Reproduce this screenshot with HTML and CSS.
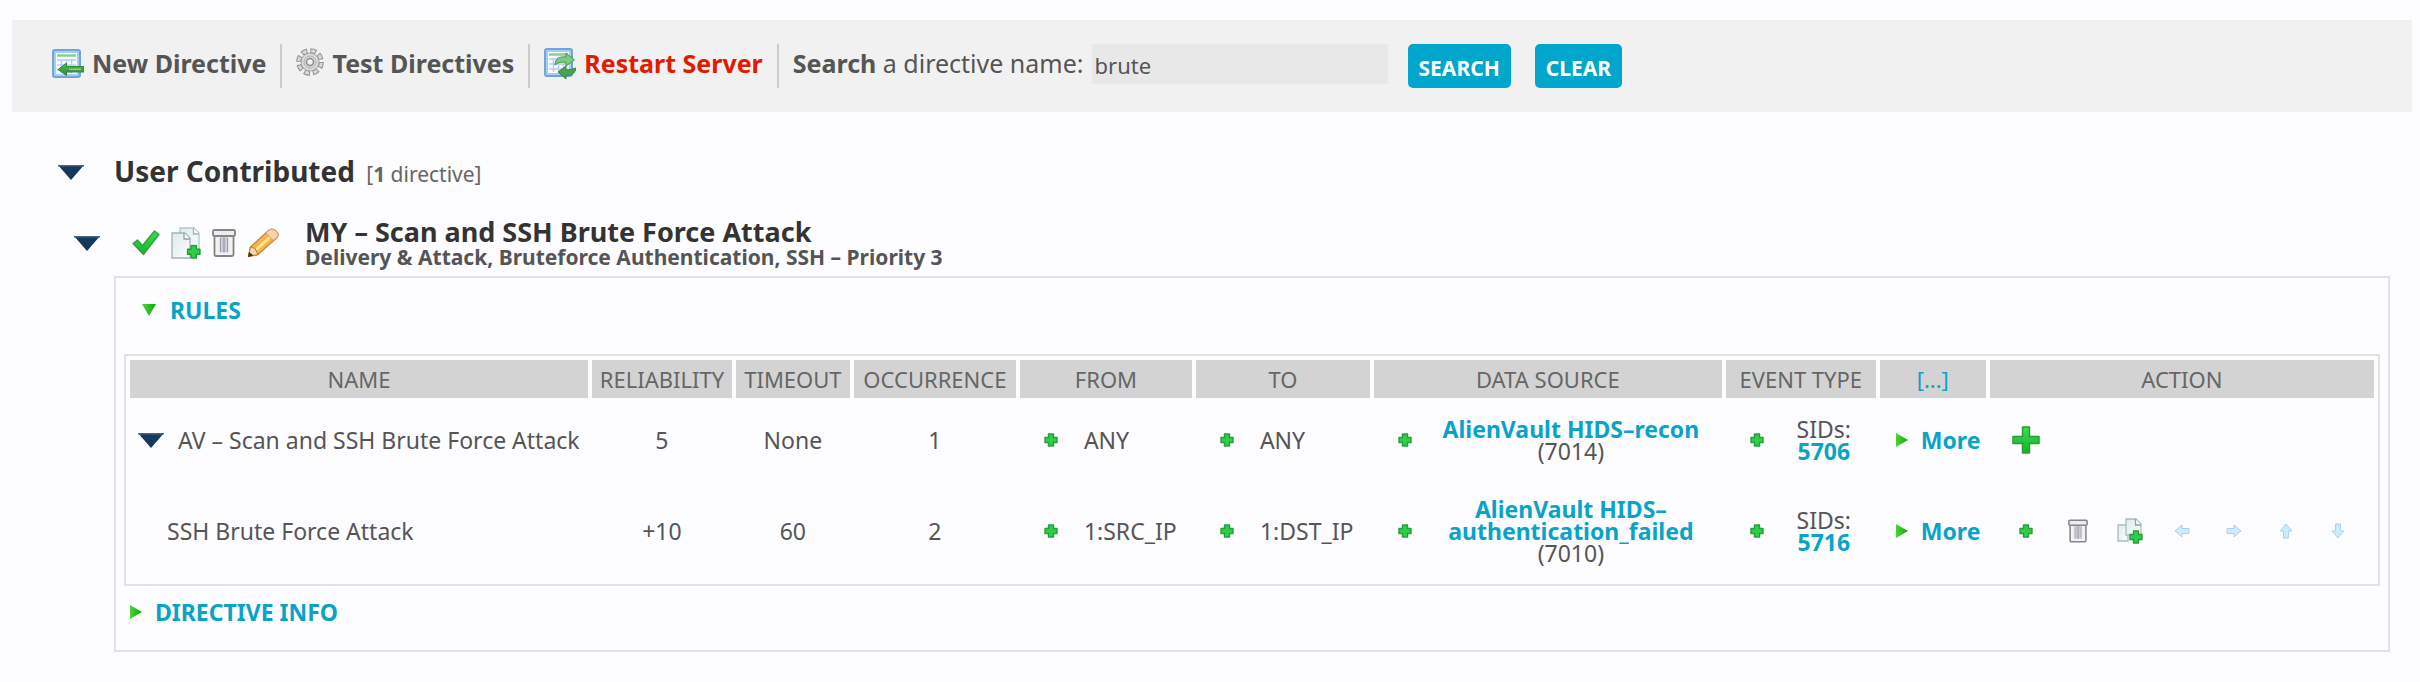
FILE: index.html
```html
<!DOCTYPE html>
<html lang="en">
<head>
<meta charset="utf-8">
<title>Directives</title>
<link rel="stylesheet" href="styles.css">
</head>
<body>
<svg class="sprite" width="0" height="0" aria-hidden="true">
  <defs>
    <linearGradient id="g-green" x1="0" y1="0" x2="0" y2="1"><stop offset="0" stop-color="#3fdc50"/><stop offset="1" stop-color="#0db52b"/></linearGradient>
    <linearGradient id="g-page" x1="0" y1="0" x2="1" y2="1"><stop offset="0" stop-color="#dfeaec"/><stop offset="1" stop-color="#fbfdfd"/></linearGradient>
    <linearGradient id="g-bin" x1="0" y1="0" x2="1" y2="0"><stop offset="0" stop-color="#f4f4f4"/><stop offset="0.5" stop-color="#b9bac6"/><stop offset="1" stop-color="#f4f4f4"/></linearGradient>
    <linearGradient id="g-arrow" x1="0" y1="0" x2="0" y2="1"><stop offset="0" stop-color="#5bb25f"/><stop offset="1" stop-color="#2c8a38"/></linearGradient>
    <linearGradient id="g-tri" x1="0" y1="0" x2="1" y2="0"><stop offset="0" stop-color="#4fd23c"/><stop offset="1" stop-color="#0cae00"/></linearGradient>
  </defs>
  <symbol id="i-sheet" viewBox="0 0 32 30">
    <rect x="1" y="1" width="27" height="27" rx="2" fill="#a9cdf0" stroke="#6ea6dc" stroke-width="2"/>
    <rect x="4" y="4" width="21" height="21" fill="#f8fbff"/>
    <path d="M5 6.500h19" stroke="#8ccf86" stroke-width="2.500"/>
    <path d="M5 11h19M5 16h19M5 21h19M9.500 10v14M14.500 10v14M19.500 10v14" stroke="#b4cfee" stroke-width="1.500"/>
  </symbol>
  <symbol id="i-new" viewBox="0 0 32 30">
    <use href="#i-sheet" width="32" height="30"/>
    <path d="M32 17.500H14.500V14L6 20.500l8.500 6V23H32z" fill="url(#g-arrow)" stroke="#2f8a3a"/>
    <path d="M17 20.300h12" stroke="#8bd08a" stroke-width="1.500"/>
  </symbol>
  <symbol id="i-restart" viewBox="0 0 32 32">
    <use href="#i-sheet" width="32" height="30"/>
    <path d="M11 17c0-6 4-9 11-8V5l8.500 7-8.500 6v-3.500c-5-1-8 0-11 2.500z" fill="#7fc983" stroke="#3f9a4b"/>
    <path d="M32 20c-1 6-5 7.500-10 7.500V31l-8-7 8-6v4c4 0 6-1 10-2z" fill="#48a452" stroke="#2f8a3a"/>
  </symbol>
  <symbol id="i-gear" viewBox="0 0 28 28">
    <circle cx="14" cy="14" r="11.300" fill="none" stroke="#8e8e8e" stroke-width="5" stroke-dasharray="5.900 2.975"/>
    <circle cx="14" cy="14" r="11.300" fill="none" stroke="#dadada" stroke-width="3" stroke-dasharray="4 4.875" stroke-dashoffset="-0.950"/>
    <circle cx="14" cy="14" r="9" fill="#dadada" stroke="#a3a3a3"/>
    <circle cx="14" cy="14" r="6" fill="none" stroke="#b0b0b0"/>
    <circle cx="14" cy="14" r="3.500" fill="#f1f1f1" stroke="#8b8b8b" stroke-width="1.500"/>
  </symbol>
  <symbol id="i-down" viewBox="0 0 26 15"><path d="M0 0h26L13 15z" fill="#14395a"/><path d="M0 .750h26" stroke="#4a6480" stroke-width="1.500"/></symbol>
  <symbol id="i-gdown" viewBox="0 0 14 12"><path d="M0 0h14L7 12z" fill="url(#g-tri)"/></symbol>
  <symbol id="i-gright" viewBox="0 0 12 14"><path d="M0 0l12 7L0 14z" fill="url(#g-tri)"/></symbol>
  <symbol id="i-check" viewBox="0 0 28 26"><path d="M1 13.500L5.500 10l5 5.500L22.500 1 27 4.500 11.500 24.500z" fill="url(#g-green)" stroke="#3d9a48" stroke-width="1.300" stroke-linejoin="round"/></symbol>
  <symbol id="i-plus" viewBox="0 0 14 14"><path d="M4.500 1h5v3.500H13v5H9.500V13h-5V9.500H1v-5h3.500z" fill="#2bd046" stroke="#2d9a3c" stroke-width="1.400" stroke-linejoin="round"/></symbol>
  <symbol id="i-bigplus" viewBox="0 0 28 28"><path d="M10.500 1h7v9.500H27v7h-9.500V27h-7v-9.500H1v-7h9.500z" fill="url(#g-green)" stroke="#2b9a3a" stroke-width="1.500" stroke-linejoin="round"/></symbol>
  <symbol id="i-copy" viewBox="0 0 30 32">
    <path d="M9 1h14l5 5v20H9z" fill="url(#g-page)" stroke="#b3c8cc" stroke-width="1.300"/>
    <path d="M22.500 1v6H28" fill="#fff" stroke="#9fb3b8" stroke-width="1.300"/>
    <path d="M1 6h13l5 5v20H1z" fill="url(#g-page)" stroke="#a3b3b8" stroke-width="1.300"/>
    <path d="M13 6v6h6" fill="#fff" stroke="#8ea2a8" stroke-width="1.300"/>
    <use href="#i-plus" x="15.500" y="17.500" width="14.500" height="14.500"/>
  </symbol>
  <symbol id="i-copy-sm" viewBox="0 0 26 26">
    <path d="M1 7h10v16H1z" fill="url(#g-page)" stroke="#a8bcc0" stroke-width="1.300"/>
    <path d="M9 1h10l5 5v11H9z" fill="url(#g-page)" stroke="#a8bcc0" stroke-width="1.300"/>
    <path d="M18.500 1v6H24" fill="#fff" stroke="#8ea2a8" stroke-width="1.300"/>
    <use href="#i-plus" x="12" y="12" width="14" height="14"/>
  </symbol>
  <symbol id="i-bin" viewBox="0 0 24 28">
    <path d="M2.500 7h19v18.500q0 1.500-1.500 1.500H4q-1.500 0-1.500-1.500z" fill="#f2f2f2" stroke="#858585" stroke-width="1.800"/>
    <rect x="6" y="8" width="12" height="15.500" fill="url(#g-bin)"/>
    <path d="M8.500 9v14M12 9v14M15.500 9v14" stroke="#9c9dab"/>
    <rect x="1" y="1" width="22" height="6" rx="1.500" fill="#ededed" stroke="#858585" stroke-width="1.800"/>
  </symbol>
  <symbol id="i-pencil" viewBox="0 0 32 30">
    <path d="M1.500 28.500L3.500 19 21.500 2.500Q25-.500 29 3t.500 7L11 26.500z" fill="#f3b64e" stroke="#c98538" stroke-width="1.300" stroke-linejoin="round"/>
    <path d="M8.500 20.500L22.500 7.500l2 2L10.500 22.500z" fill="#ffe97a"/>
    <path d="M21.500 2.500Q25-.500 29 3t.500 7L26 12.500 19 5z" fill="#f7d3ae" stroke="#d59a60"/>
    <path d="M1.500 28.500L3.500 19l4.500 1.500L11 26.500z" fill="#f6d9b0" stroke="#c07a3a"/>
    <path d="M1 29l1-5 4.500 3.500z" fill="#4a2f23"/>
  </symbol>
  <symbol id="i-left" viewBox="0 0 16 14"><path d="M1 7l7-6v3.500h7v5H8V13z" fill="#cdebfd" stroke="#a9d3ee" stroke-linejoin="round"/></symbol>
</svg>

<form class="toolbar">
  <a class="tool" href="#new"><svg class="ic-new"><use href="#i-new"/></svg>New Directive</a>
  <a class="tool" href="#test"><svg class="ic-gear"><use href="#i-gear"/></svg>Test Directives</a>
  <a class="tool tool-alert" href="#restart"><svg class="ic-restart"><use href="#i-restart"/></svg>Restart Server</a>
  <label class="search-label" for="q"><b>Search</b> a directive name:</label>
  <input class="search-box" id="q" type="text" value="brute">
  <button class="btn" type="button">SEARCH</button>
  <button class="btn" type="button">CLEAR</button>
</form>

<main class="content">
  <header class="group">
    <button class="icon-btn" type="button" aria-label="Collapse group"><svg class="ic-down"><use href="#i-down"/></svg></button>
    <h1 class="group-title">User Contributed <small class="count">[<b>1</b> directive]</small></h1>
  </header>

  <section>
    <header class="directive">
      <button class="icon-btn" type="button" aria-label="Collapse directive"><svg class="ic-down"><use href="#i-down"/></svg></button>
      <div class="directive-tools">
        <button class="icon-btn" type="button" aria-label="Enable"><svg class="ic-check"><use href="#i-check"/></svg></button>
        <button class="icon-btn" type="button" aria-label="Clone"><svg class="ic-copy"><use href="#i-copy"/></svg></button>
        <button class="icon-btn" type="button" aria-label="Delete"><svg class="ic-bin"><use href="#i-bin"/></svg></button>
        <button class="icon-btn" type="button" aria-label="Edit"><svg class="ic-pencil"><use href="#i-pencil"/></svg></button>
      </div>
      <div>
        <h2 class="directive-title">MY – Scan and SSH Brute Force Attack</h2>
        <p class="directive-sub">Delivery &amp; Attack, Bruteforce Authentication, SSH – Priority 3</p>
      </div>
    </header>

    <div class="panel">
      <a class="fold fold-rules" href="#rules"><svg class="ic-gdown"><use href="#i-gdown"/></svg>RULES</a>
      <table class="rules" id="rules">
        <colgroup>
          <col class="c-name"><col class="c-rel"><col class="c-time"><col class="c-occ"><col class="c-from"><col class="c-to"><col class="c-source"><col class="c-event"><col class="c-more"><col>
        </colgroup>
        <thead>
          <tr><th>NAME</th><th>RELIABILITY</th><th>TIMEOUT</th><th>OCCURRENCE</th><th>FROM</th><th>TO</th><th>DATA SOURCE</th><th>EVENT TYPE</th><th><a class="expand" href="#cols">[...]</a></th><th>ACTION</th></tr>
        </thead>
        <tbody>
          <tr class="parent">
            <td><div class="name"><button class="icon-btn" type="button" aria-label="Collapse rule"><svg class="ic-down"><use href="#i-down"/></svg></button>AV – Scan and SSH Brute Force Attack</div></td>
            <td>5</td><td>None</td><td>1</td>
            <td><div class="pick"><button class="icon-btn" type="button" aria-label="Add source"><svg class="ic-plus"><use href="#i-plus"/></svg></button><span>ANY</span></div></td>
            <td><div class="pick"><button class="icon-btn" type="button" aria-label="Add destination"><svg class="ic-plus"><use href="#i-plus"/></svg></button><span>ANY</span></div></td>
            <td><div class="pick pick-center"><button class="icon-btn" type="button" aria-label="Add data source"><svg class="ic-plus"><use href="#i-plus"/></svg></button><span><a class="link" href="#ds7014">AlienVault HIDS–recon</a><br>(7014)</span></div></td>
            <td><div class="pick pick-center"><button class="icon-btn" type="button" aria-label="Add event type"><svg class="ic-plus"><use href="#i-plus"/></svg></button><span>SIDs: <a class="link" href="#sid5706">5706</a></span></div></td>
            <td><a class="more" href="#more1"><svg class="ic-gright"><use href="#i-gright"/></svg>More</a></td>
            <td><div class="actions"><button class="icon-btn" type="button" aria-label="Add child rule"><svg class="ic-bigplus"><use href="#i-bigplus"/></svg></button></div></td>
          </tr>
          <tr class="child">
            <td><div class="name name-child">SSH Brute Force Attack</div></td>
            <td>+10</td><td>60</td><td>2</td>
            <td><div class="pick"><button class="icon-btn" type="button" aria-label="Add source"><svg class="ic-plus"><use href="#i-plus"/></svg></button><span>1:SRC_IP</span></div></td>
            <td><div class="pick"><button class="icon-btn" type="button" aria-label="Add destination"><svg class="ic-plus"><use href="#i-plus"/></svg></button><span>1:DST_IP</span></div></td>
            <td><div class="pick pick-center"><button class="icon-btn" type="button" aria-label="Add data source"><svg class="ic-plus"><use href="#i-plus"/></svg></button><span><a class="link" href="#ds7010">AlienVault HIDS–<wbr>authentication_failed</a><br>(7010)</span></div></td>
            <td><div class="pick pick-center"><button class="icon-btn" type="button" aria-label="Add event type"><svg class="ic-plus"><use href="#i-plus"/></svg></button><span>SIDs: <a class="link" href="#sid5716">5716</a></span></div></td>
            <td><a class="more" href="#more2"><svg class="ic-gright"><use href="#i-gright"/></svg>More</a></td>
            <td><div class="actions">
              <button class="icon-btn" type="button" aria-label="Add child rule"><svg class="ic-plus"><use href="#i-plus"/></svg></button>
              <button class="icon-btn" type="button" aria-label="Delete rule"><svg class="ic-bin-sm"><use href="#i-bin"/></svg></button>
              <button class="icon-btn" type="button" aria-label="Clone rule"><svg class="ic-copy-sm"><use href="#i-copy-sm"/></svg></button>
              <button class="icon-btn" type="button" aria-label="Move left"><svg class="ic-move"><use href="#i-left"/></svg></button>
              <button class="icon-btn" type="button" aria-label="Move right"><svg class="ic-move ic-right"><use href="#i-left"/></svg></button>
              <button class="icon-btn" type="button" aria-label="Move up"><svg class="ic-move ic-up"><use href="#i-left"/></svg></button>
              <button class="icon-btn" type="button" aria-label="Move down"><svg class="ic-move ic-dn"><use href="#i-left"/></svg></button>
            </div></td>
          </tr>
        </tbody>
      </table>
      <a class="fold fold-info" href="#info"><svg class="ic-gright"><use href="#i-gright"/></svg>DIRECTIVE INFO</a>
    </div>
  </section>
</main>
</body>
</html>
```
FILE: styles.css
```css
* { box-sizing: border-box; }

body {
  margin: 0;
  padding: 20px 8px 28px 12px;
  background: #fdfcfe;
  color: #555;
  font: 23px/22px "Noto Sans", "Open Sans", sans-serif;
}

a { color: inherit; text-decoration: none; }
svg { display: block; flex: none; }
.sprite { position: absolute; }

.icon-btn {
  display: flex;
  align-items: center;
  justify-content: center;
  padding: 0;
  border: 0;
  background: none;
}

/* Toolbar */
.toolbar {
  display: flex;
  align-items: flex-start;
  padding: 24px 40px;
  background: #f1f1f1;
  font-size: 25px;
}
.tool {
  display: flex;
  gap: 8px;
  height: 44px;
  margin-right: 14px;
  padding-right: 14px;
  border-right: 2px solid #ccc;
  font-weight: 700;
  line-height: 38px;
  white-space: nowrap;
}
.tool svg { margin-top: 4px; }
.tool-alert { color: #e01b00; border-color: #ccc; }
.search-label { margin-right: 8px; line-height: 38px; white-space: nowrap; }
.search-box {
  width: 296px;
  height: 40px;
  margin-right: 20px;
  padding: 2px 3px 0;
  border: 0;
  background: #e8e8e8;
  color: #555;
  font: 22px "Noto Sans", sans-serif;
}
.btn {
  height: 44px;
  margin-right: 24px;
  padding: 3px 11px 0;
  border: 0;
  border-radius: 5px;
  background: #00a6cb;
  color: #fff;
  font: 700 21px "Noto Sans", sans-serif;
}

/* Headings */
.content { padding: 40px 22px 0 46px; }
.group {
  display: flex;
  align-items: center;
  gap: 30px;
  height: 40px;
}
.group-title {
  margin: 0;
  color: #333;
  font-size: 28px;
  line-height: 40px;
}
.count { margin-left: 4px; color: #666; font-size: 21px; font-weight: 400; }
.directive {
  display: flex;
  align-items: center;
  gap: 32px;
  padding: 26px 0 8px 16px;
}
.directive-tools {
  display: flex;
  align-items: center;
  gap: 11px;
  margin-right: -6px;
}
.directive-title { margin: 0; color: #333; font-size: 27px; line-height: 28px; }
.directive-sub { margin: 0; font-size: 21px; font-weight: 700; line-height: 22px; }

/* Panel */
.panel {
  margin-left: 56px;
  padding: 20px 8px 27px;
  border: 2px solid #e2e2e2;
}
.fold {
  display: flex;
  align-items: center;
  color: #0aa3c8;
  font-weight: 700;
}
.fold-rules { gap: 14px; padding: 1px 18px 33px; }
.fold-info { gap: 13px; padding: 15px 6px 0; }

.rules {
  width: 100%;
  border: 2px solid #e2e2e2;
  border-spacing: 4px;
  table-layout: fixed;
}
.c-name { width: 20.740%; }
.c-rel { width: 6.340%; }
.c-time { width: 5.160%; }
.c-occ { width: 7.340%; }
.c-from { width: 7.790%; }
.c-to { width: 7.880%; }
.c-source { width: 15.760%; }
.c-event { width: 6.790%; }
.c-more { width: 4.800%; }
.rules thead { background: #fff; }
.rules th {
  height: 38px;
  padding: 0;
  background: #d3d3d3;
  color: #666;
  font-size: 22px;
  font-weight: 400;
}
.rules td { padding: 0; text-align: center; vertical-align: middle; }
.parent td { height: 76px; }
.child td { height: 98px; }

.name {
  display: flex;
  align-items: center;
  gap: 14px;
  padding-left: 8px;
  white-space: nowrap;
}
.name-child { padding-left: 37px; }
.pick {
  display: grid;
  grid-template-columns: 62px auto;
  align-items: center;
  text-align: left;
}
.pick > span { padding-left: 2px; }
.pick-center { grid-template-columns: 62px 1fr; padding-right: 18px; text-align: center; }
.link, .more, .expand { color: #0aa3c8; }
.link, .more { font-weight: 700; }
.more { display: flex; align-items: center; gap: 13px; padding-left: 16px; }
.actions {
  display: grid;
  grid-template-columns: repeat(7, 52px);
  align-items: center;
  padding-left: 10px;
}

/* Icon sizes */
.ic-new, .ic-restart { width: 32px; height: 32px; }
.ic-gear { width: 28px; height: 28px; }
.ic-down { width: 26px; height: 15px; }
.ic-gdown { width: 14px; height: 12px; }
.ic-gright { width: 12px; height: 14px; }
.ic-check { width: 28px; height: 26px; }
.ic-copy { width: 30px; height: 32px; }
.ic-bin { width: 24px; height: 28px; }
.ic-pencil { width: 32px; height: 30px; }
.ic-plus { width: 14px; height: 14px; }
.ic-bigplus { width: 28px; height: 28px; }
.ic-bin-sm { width: 20px; height: 24px; }
.ic-copy-sm { width: 26px; height: 26px; }
.ic-move { width: 16px; height: 14px; }
.ic-right { transform: rotate(180deg); }
.ic-up { transform: rotate(90deg); }
.ic-dn { transform: rotate(-90deg); }
```
